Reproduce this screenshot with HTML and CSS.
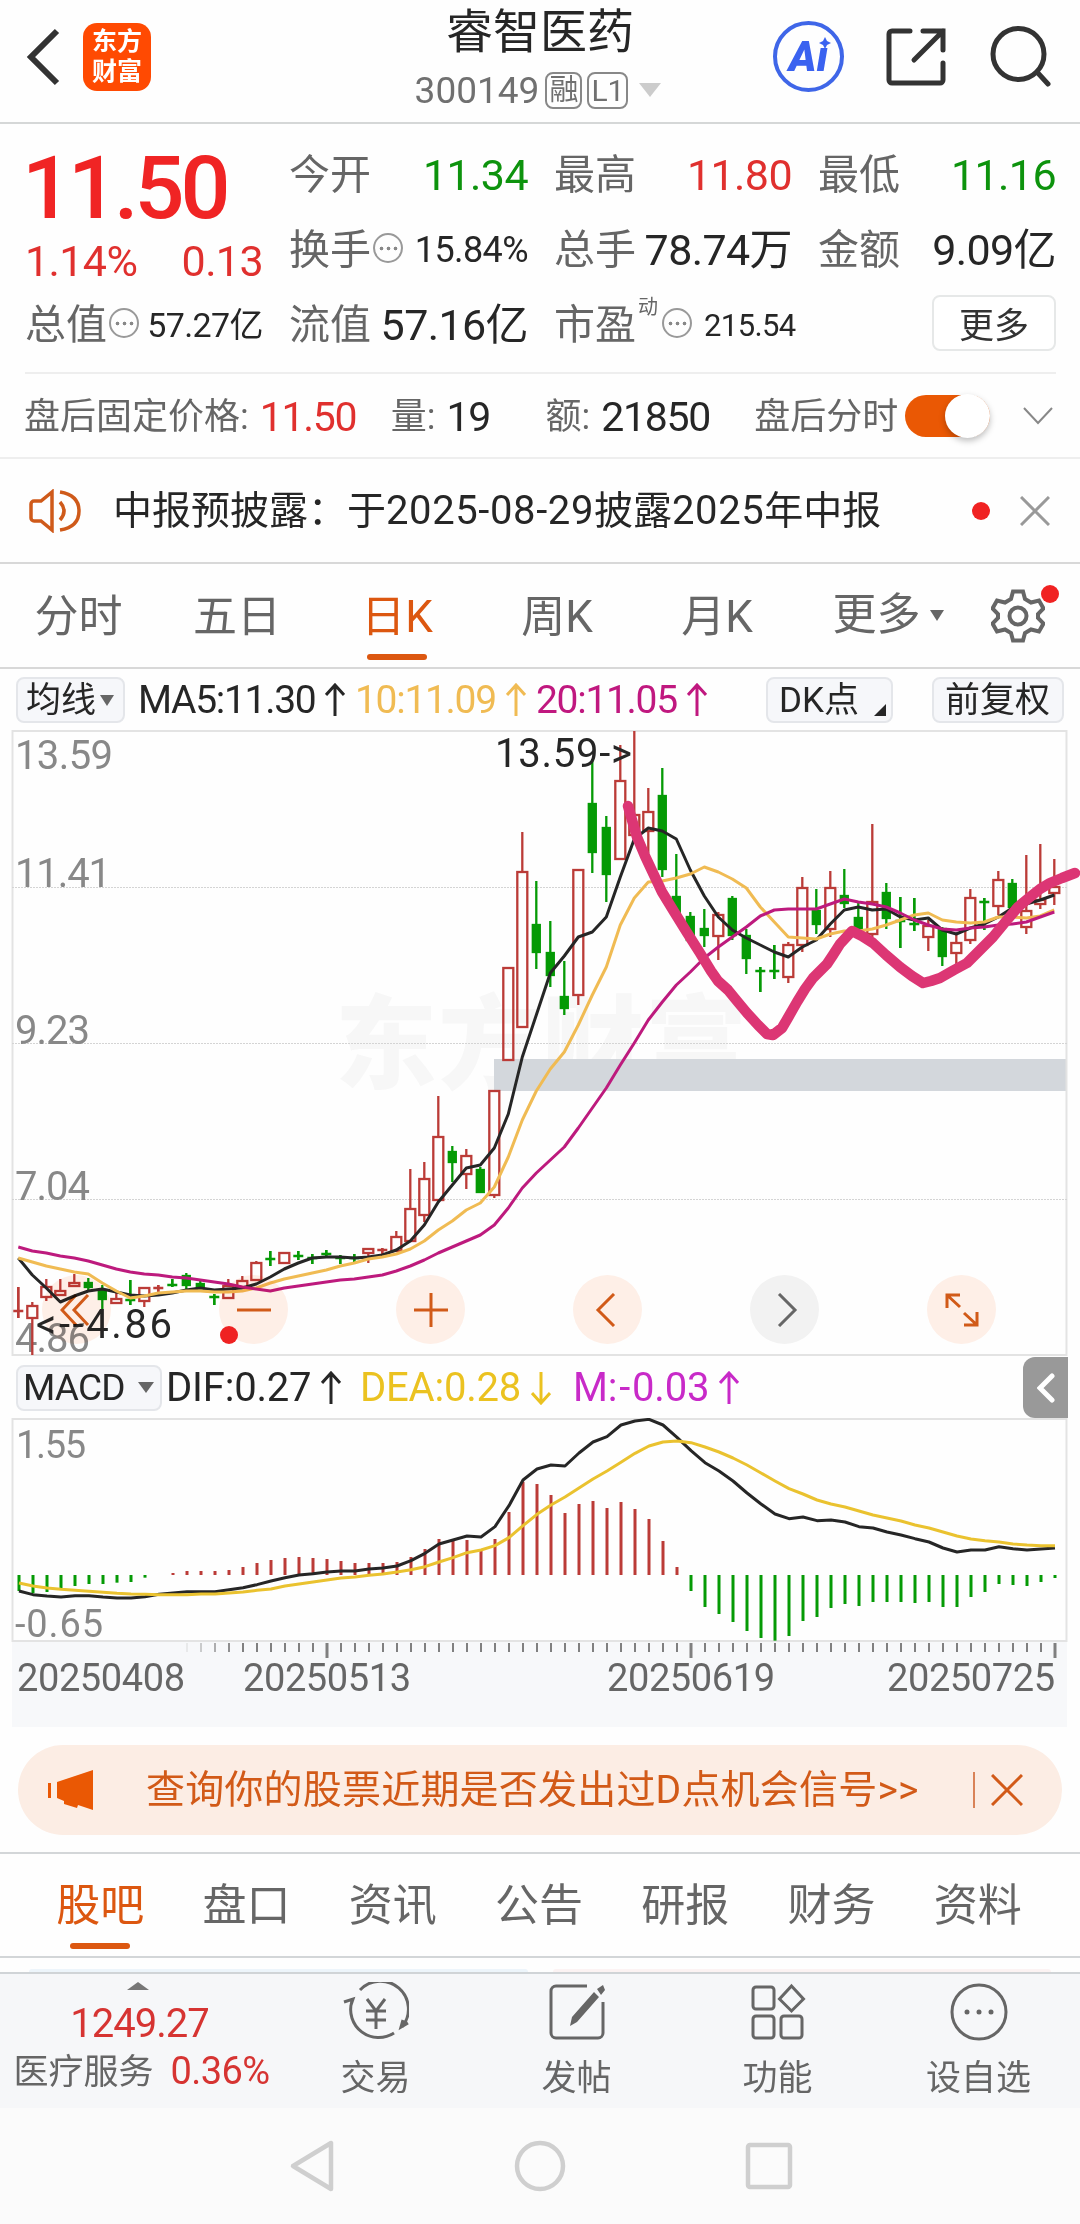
FILE: index.html
```
<!DOCTYPE html>
<html lang="zh-CN">
<head>
    <meta charset="UTF-8">
    <meta name="viewport" content="width=device-width, initial-scale=1.0">
    <title>睿智医药 300149</title>
    <link rel="stylesheet" href="styles.css">
</head>
<body>
    <header class="header">
        <div class="header-left">
            <svg class="back" width="36" height="60" viewBox="0 0 36 60"><path d="M32 4 6 30l26 26"/></svg>
            <div class="logo"><span>东方</span><span>财富</span></div>
        </div>
        <div class="header-title">
            <h1>睿智医药</h1>
            <div class="code">
                <span class="code-num">300149</span>
                <span class="tag">融</span>
                <span class="tag tag-l1">L1</span>
                <i class="tri tri-light"></i>
            </div>
        </div>
        <div class="header-right">
            <div class="ai"><span>A</span><span>ı</span><svg width="12" height="12" viewBox="0 0 12 12"><path d="m6 0 2 4 4 2-4 2-2 4-2-4-4-2 4-2z"/></svg></div>
            <svg class="line-icon" width="62" height="62" viewBox="0 0 62 62"><path d="M24 5H6a3 3 0 0 0-3 3v46a3 3 0 0 0 3 3h48a3 3 0 0 0 3-3V37M37 5h20v19M57 5 28 34"/></svg>
            <svg class="line-icon" width="64" height="64" viewBox="0 0 64 64"><circle cx="31.500" cy="29" r="25.500"/><path d="m50 47 11 12"/></svg>
        </div>
    </header>

    <section class="quote">
        <div class="price">
            <div class="price-now">11.50</div>
            <div class="price-change"><span>1.14%</span><span>0.13</span></div>
        </div>
        <div class="item"><label>今开</label><b class="green">11.34</b></div>
        <div class="item"><label>最高</label><b class="red">11.80</b></div>
        <div class="item"><label>最低</label><b class="green">11.16</b></div>
        <div class="item"><label>换手</label><i class="more-dot"></i><b class="small">15.84%</b></div>
        <div class="item"><label>总手</label><b>78.74万</b></div>
        <div class="item"><label>金额</label><b>9.09亿</b></div>
        <div class="item"><label>总值</label><i class="more-dot"></i><b class="small tight">57.27亿</b></div>
        <div class="item"><label>流值</label><b>57.16亿</b></div>
        <div class="item"><label>市盈</label><sup>动</sup><i class="more-dot"></i><b class="tiny">215.54</b></div>
        <div class="item"><button class="more-btn">更多</button></div>
    </section>

    <section class="after">
        <label>盘后固定价格:</label><b class="red after-price">11.50</b>
        <label>量:</label><b class="after-vol">19</b>
        <label>额:</label><b class="after-amt">21850</b>
        <label class="after-label">盘后分时</label>
        <div class="toggle"><i></i></div>
        <svg class="after-arrow" width="30" height="18" viewBox="0 0 30 18"><path d="m1 1 14 15L29 1"/></svg>
    </section>

    <section class="notice">
        <svg class="speaker" width="52" height="44" viewBox="0 0 52 44"><path d="M23 3 12 12H5a3 3 0 0 0-3 3v14a3 3 0 0 0 3 3h7l11 9zM31 13q8 9 0 18M31 3q19 3 19 19T31 41"/></svg>
        <p>中报预披露：于<span>2025-08-29</span>披露<span>2025</span>年中报</p>
        <i class="dot"></i>
        <svg class="close" width="30" height="30" viewBox="0 0 30 30"><path d="m1 1 28 28M29 1 1 29"/></svg>
    </section>

    <nav class="period">
        <a>分时</a>
        <a>五日</a>
        <a class="active">日K</a>
        <a>周K</a>
        <a>月K</a>
        <a class="period-more">更多<i class="tri tri-small"></i></a>
        <a class="period-set">
            <svg width="54" height="54" viewBox="0 0 54 54"><path d="M22 2.500h10l2 7.500 6 3.500 8-2 4.500 8-5.500 5.500v4l5.500 5.500-4.500 8-8-2-6 3.500-2 7.500H22l-2-7.500-6-3.500-8 2-4.500-8L7 29v-4l-5.500-5.500 4.500-8 8 2 6-3.500z"/><circle cx="27" cy="27" r="8.500"/></svg>
            <i class="dot"></i>
        </a>
    </nav>

    <section class="ma">
        <div class="chip chip-ma">均线<i class="tri tri-small"></i></div>
        <span class="ma5">MA5:11.30<svg class="arrow" width="20" height="34" viewBox="0 0 20 34"><path d="M10 33V2M1 12l9-10 9 10"/></svg></span>
        <span class="ma10">10:11.09<svg class="arrow" width="20" height="34" viewBox="0 0 20 34"><path d="M10 33V2M1 12l9-10 9 10"/></svg></span>
        <span class="ma20">20:11.05<svg class="arrow" width="20" height="34" viewBox="0 0 20 34"><path d="M10 33V2M1 12l9-10 9 10"/></svg></span>
        <div class="chip chip-dk">DK点<i class="corner"></i></div>
        <div class="chip chip-fq">前复权</div>
    </section>

    <section class="kline">
        <svg id="kline" width="1080" height="627" viewBox="0 730 1080 627"></svg>
        <div class="tools">
            <span class="tool"><svg width="34" height="34" viewBox="0 0 34 34"><path d="M16 2 2 17l14 15M28 2 14 17l14 15"/></svg></span>
            <span class="tool"><svg width="34" height="34" viewBox="0 0 34 34"><path d="M0 17h34"/></svg><i class="dot"></i></span>
            <span class="tool"><svg width="34" height="34" viewBox="0 0 34 34"><path d="M0 17h34M17 0v34"/></svg></span>
            <span class="tool"><svg width="34" height="34" viewBox="0 0 34 34"><path d="M23 1 7 17l16 16"/></svg></span>
            <span class="tool tool-off"><svg width="34" height="34" viewBox="0 0 34 34"><path d="m11 1 16 16-16 16"/></svg></span>
            <span class="tool"><svg width="36" height="36" viewBox="0 0 36 36"><path d="M3 16V3h13M3 3l13 12M33 20v13H20M33 33 20 21"/></svg></span>
        </div>
    </section>

    <section class="macd-bar">
        <div class="chip chip-macd">MACD<i class="tri tri-small"></i></div>
        <span class="dif">DIF:0.27<svg class="arrow" width="20" height="34" viewBox="0 0 20 34"><path d="M10 33V2M1 12l9-10 9 10"/></svg></span>
        <span class="dea">DEA:0.28<svg class="arrow" width="20" height="34" viewBox="0 0 20 34"><path d="M10 1v31M1 22l9 10 9-10"/></svg></span>
        <span class="m">M:<span>-</span>0.03<svg class="arrow" width="20" height="34" viewBox="0 0 20 34"><path d="M10 33V2M1 12l9-10 9 10"/></svg></span>
        <div class="fold"><svg width="18" height="30" viewBox="0 0 18 30"><path d="M15 3 3 15l12 12"/></svg></div>
    </section>

    <svg id="macd" class="macd" width="1080" height="310" viewBox="0 1418 1080 310"></svg>

    <section class="promo">
        <svg class="horn" width="48" height="40" viewBox="0 0 48 40"><path d="M1 13h3v15H1zM10 12 46 0v40l-15-5-1 3-13-4v-3l-7-3z"/></svg>
        <p>查询你的股票近期是否发出过D点机会信号&gt;&gt;</p>
        <i class="promo-line"></i>
        <svg class="promo-close" width="32" height="32" viewBox="0 0 32 32"><path d="m1 1 30 30M31 1 1 31"/></svg>
    </section>

    <nav class="tabs">
        <a class="active">股吧</a>
        <a>盘口</a>
        <a>资讯</a>
        <a>公告</a>
        <a>研报</a>
        <a>财务</a>
        <a>资料</a>
    </nav>
    <div class="cards"><i></i><i class="pink"></i></div>

    <footer class="bottom">
        <div class="sector">
            <i class="tri tri-up"></i>
            <div class="sector-num">1249.27</div>
            <div class="sector-name">医疗服务<b>0.36%</b></div>
        </div>
        <div class="action">
            <svg width="66" height="60" viewBox="0 0 66 60"><path d="M17 8a28 28 0 0 1 42 37M51 51A28 28 0 0 1 9 19M1 20l9-3-2 6M65 41l-7 4 2-7M24 17l9 12 9-12M33 29v18M23 29h20M23 38h20"/></svg>
            <span>交易</span>
        </div>
        <div class="action">
            <svg width="60" height="60" viewBox="0 0 60 60"><path d="M40 4H9a5 5 0 0 0-5 5v42a5 5 0 0 0 5 5h42a5 5 0 0 0 5-5V20"/><path class="solid" d="m50 7 6-4 2 5-4 5zM47 10l5 5-22 25-7 4 2-9z"/></svg>
            <span>发帖</span>
        </div>
        <div class="action">
            <svg width="60" height="60" viewBox="0 0 60 60"><rect x="5" y="5" width="21" height="22" rx="3"/><rect x="5" y="34" width="21" height="22" rx="3"/><rect x="33" y="34" width="21" height="22" rx="3"/><path d="m43.500 4 12 13-12 12-12-12z"/></svg>
            <span>功能</span>
        </div>
        <div class="action">
            <svg width="60" height="60" viewBox="0 0 60 60"><circle cx="30" cy="30" r="27"/><g class="solid"><circle cx="18" cy="30" r="2.500"/><circle cx="30" cy="30" r="2.500"/><circle cx="42" cy="30" r="2.500"/></g></svg>
            <span>设自选</span>
        </div>
    </footer>

    <div class="sysnav">
        <svg width="50" height="54" viewBox="0 0 50 54"><path d="M43 4v46L5 27z"/></svg>
        <svg width="54" height="54" viewBox="0 0 54 54"><circle cx="27" cy="27" r="23"/></svg>
        <svg width="54" height="54" viewBox="0 0 54 54"><rect x="6" y="6" width="42" height="42" rx="2"/></svg>
    </div>

    <script src="script.js"></script>
</body>
</html>
```
FILE: styles.css
```
* {
    box-sizing: border-box;
}
body {
    margin: 0;
    width: 1080px;
    height: 2224px;
    overflow: hidden;
    background: #fefefe;
    color: #262626;
    font-family: Roboto, "Noto Sans CJK SC", sans-serif;
    line-height: 1;
}
h1, p {
    margin: 0;
    font-weight: 400;
}
b {
    font-weight: 400;
}
svg {
    display: block;
    flex: none;
    fill: none;
}
.red {
    color: #e0302e;
}
.green {
    color: #0d930d;
}
.dot {
    width: 18px;
    height: 18px;
    border-radius: 50%;
    background: #f02222;
}
.tri {
    width: 0;
    height: 0;
    border: 11px solid transparent;
    border-bottom: 0;
    border-top: 14px solid #ccc;
}
.tri-small {
    border-width: 11px 7px 0;
    border-top-color: #666;
}
.tri-up {
    border: 11px solid transparent;
    border-top: 0;
    border-bottom: 8px solid #777;
}

/* 顶部 */
.header {
    display: grid;
    grid-template-columns: 320px 1fr 320px;
    height: 124px;
    border-bottom: 2px solid #d5d7d7;
}
.header-left {
    display: flex;
    align-items: center;
    height: 113px;
    padding-left: 25px;
}
.back {
    stroke: #333;
    stroke-width: 6;
}
.logo {
    width: 68px;
    height: 68px;
    margin-left: 22px;
    padding-top: 4px;
    border-radius: 14px;
    background: #ff4a02;
    color: #fff;
    font-size: 25px;
    font-weight: 700;
    line-height: 30px;
    text-align: center;
}
.logo span {
    display: block;
}
.header-title {
    text-align: center;
}
.header-title h1 {
    height: 68px;
    font-size: 47px;
    line-height: 64px;
}
.code {
    display: flex;
    align-items: center;
    justify-content: center;
    height: 44px;
    margin-left: -4px;
    color: #707070;
    gap: 5px;
}
.code-num {
    margin-right: 1px;
    font-size: 37px;
}
.tag {
    width: 37px;
    height: 37px;
    border: 2px solid #888;
    border-radius: 8px;
    font-size: 29px;
    line-height: 32px;
}
.tag-l1 {
    width: 41px;
    font-size: 30px;
    line-height: 34px;
}
.code .tri {
    margin-left: 6px;
}
.header-right {
    display: flex;
    align-items: center;
    height: 113px;
    padding-left: 13px;
}
.header-right .line-icon {
    stroke: #333;
    stroke-width: 5;
    stroke-linecap: round;
}
.ai {
    position: relative;
    display: flex;
    justify-content: center;
    width: 71px;
    height: 71px;
    margin-right: 42px;
    border: 4px solid #3f66e8;
    border-radius: 50%;
    color: #3a62f0;
    font-size: 42px;
    font-style: italic;
    font-weight: 900;
    line-height: 64px;
}
.ai svg {
    position: absolute;
    top: 12px;
    right: 9px;
    fill: #3a62f0;
}
.header-right .line-icon + .line-icon {
    margin-left: 39px;
}

/* 行情 */
.quote {
    display: grid;
    grid-template-columns: 238px 239px 238px 238px;
    grid-template-rows: 75px 75px 75px;
    column-gap: 26px;
    height: 250px;
    margin: 0 24px 0 25px;
    padding-top: 13px;
    border-bottom: 2px solid #eee;
}
.price {
    grid-row: span 2;
    color: #f02424;
}
.price-now {
    height: 98px;
    margin-left: -3px;
    font-size: 88px;
    font-weight: 500;
    line-height: 102px;
    letter-spacing: -4px;
}
.price-change {
    display: flex;
    justify-content: space-between;
    color: #e0302e;
    font-size: 43px;
    line-height: 52px;
    letter-spacing: -0.6px;
}
.item {
    display: flex;
    align-items: center;
    justify-content: space-between;
    position: relative;
    padding-top: 1px;
}
.item label {
    flex: none;
    color: #666;
    font-size: 41px;
}
.item b {
    margin-left: auto;
    font-size: 43px;
    letter-spacing: -0.6px;
    white-space: nowrap;
}
.item b.small {
    font-size: 36px;
}
.item b.tight {
    font-size: 34px;
    letter-spacing: -0.6px;
}
.item b.tiny {
    margin: 0 auto 0 12px;
    font-size: 31px;
}
.item sup {
    align-self: flex-start;
    flex: none;
    width: 22px;
    margin-top: 9px;
    margin-left: 2px;
    color: #666;
    font-size: 20px;
}
.more-dot {
    flex: none;
    width: 30px;
    height: 30px;
    margin: -4px 0 0 2px;
    border: 2px solid #999;
    border-radius: 50%;
    background: radial-gradient(circle, #888 1.500px, transparent 2.200px) center / 7px 7px no-repeat,
        radial-gradient(circle, #888 1.500px, transparent 2.200px) 3px 10px / 7px 7px no-repeat,
        radial-gradient(circle, #888 1.500px, transparent 2.200px) 17px 10px / 7px 7px no-repeat;
}
.more-btn {
    width: 124px;
    height: 56px;
    margin: -4px 0 0 auto;
    padding: 0 0 4px;
    border: 2px solid #e6e8e8;
    border-radius: 8px;
    background: #fff;
    color: #333;
    font: 35px Roboto, "Noto Sans CJK SC", sans-serif;
}

/* 盘后 */
.after {
    display: flex;
    align-items: center;
    height: 85px;
    padding-left: 24px;
    border-bottom: 2px solid #eee;
    white-space: nowrap;
}
.after label {
    padding-top: 3px;
    color: #666;
    font-size: 36px;
}
.after b {
    margin-left: 11px;
    padding-top: 3px;
    font-size: 41px;
    letter-spacing: -1.3px;
}
.after-price {
    width: 131px;
}
.after-vol {
    width: 99px;
}
.after-amt {
    width: 153px;
}
.after .after-label {
    margin-right: 7px;
}
.toggle {
    width: 85px;
    height: 42px;
    border-radius: 21px;
    background: #ea5804;
}
.toggle i {
    display: block;
    width: 45px;
    height: 44px;
    margin: -1px 0 0 40px;
    border-radius: 50%;
    background: #fff;
    box-shadow: 0 3px 6px rgba(0, 0, 0, 0.25);
}
.after-arrow {
    margin-left: 33px;
    stroke: #888;
    stroke-width: 2;
}

/* 公告 */
.notice {
    display: flex;
    align-items: center;
    height: 105px;
    padding-left: 29px;
    border-bottom: 2px solid #d8d8d8;
}
.speaker {
    stroke: #cf5a1a;
    stroke-width: 3.500;
}
.notice p {
    width: 858px;
    padding-left: 32px;
    font-size: 39px;
    white-space: nowrap;
}
.notice p span {
    font-size: 40px;
    letter-spacing: 0.6px;
}
.notice .dot {
    margin-left: 33px;
}
.close {
    margin-left: 30px;
    stroke: #999;
    stroke-width: 3;
}

/* 周期 */
.period {
    display: flex;
    height: 105px;
    border-bottom: 2px solid #d8d8d8;
    color: #666;
    font-size: 44px;
}
.period a {
    position: relative;
    width: 160px;
    line-height: 107px;
    text-align: center;
    white-space: nowrap;
}
.period a:first-child {
    width: 157px;
}
.period .active,
.tabs .active {
    color: #dc5710;
}
.period .active::after,
.tabs .active::after {
    content: "";
    position: absolute;
    bottom: 7px;
    left: 50%;
    width: 60px;
    height: 6px;
    margin-left: -30px;
    border-radius: 3px;
    background: #dc5710;
}
.period .period-more {
    display: flex;
    align-items: center;
    justify-content: center;
    width: 182px;
}
.period-more .tri {
    margin-left: 9px;
}
.period .period-set {
    width: 98px;
    padding: 25px 0 0 12px;
}
.period-set svg {
    stroke: #666;
    stroke-width: 4;
}
.period-set .dot {
    position: absolute;
    top: 21px;
    left: 62px;
}

/* 均线 */
.ma,
.macd-bar {
    display: flex;
    align-items: center;
    height: 61px;
    font-size: 39px;
    white-space: nowrap;
}
.ma {
    padding: 1px 0 0 16px;
    letter-spacing: -1.3px;
}
.chip {
    position: relative;
    display: flex;
    align-items: center;
    height: 46px;
    border: 2px solid #e4e6ea;
    border-radius: 8px;
    background: #f6f7fa;
    font-size: 35px;
    letter-spacing: 0;
}
.chip-ma {
    width: 109px;
    padding-left: 8px;
}
.chip-ma .tri {
    margin-left: 4px;
}
.arrow {
    display: inline-block;
    margin-left: 10px;
    vertical-align: -4px;
    stroke: currentColor;
    stroke-width: 3;
}
.ma5 {
    width: 218px;
    padding-left: 13px;
}
.ma10 {
    width: 181px;
    padding-left: 12px;
    color: #f0bb53;
}
.ma20 {
    width: 229px;
    padding-left: 12px;
    color: #c0187f;
}
.chip-dk {
    width: 127px;
    margin-left: 13px;
    padding-left: 11px;
}
.corner {
    position: absolute;
    right: 5px;
    bottom: 5px;
    border: 6px solid #262626;
    border-top-color: transparent;
    border-left-color: transparent;
}
.chip-fq {
    width: 132px;
    margin-left: 39px;
    padding-left: 11px;
}

/* K线 */
.kline {
    position: relative;
    height: 627px;
}
.kline text,
.macd text {
    fill: #888;
    font-size: 40px;
}
.kline .mark {
    fill: #262626;
}
.kline .watermark {
    fill: #f7f7f7;
    font-size: 102px;
    font-weight: 900;
}
.macd .date {
    fill: #666;
    font-size: 38px;
}
.macd .scale {
    font-size: 38px;
}
.frame {
    stroke: #e3e3e3;
    stroke-width: 2;
}
.grid {
    stroke: #d4d4d4;
    stroke-width: 1;
    stroke-dasharray: 2 1;
}
.gap {
    fill: #d3d7dc;
}
.up {
    stroke: #bb3b37;
    stroke-width: 2.300;
}
.down {
    fill: #059a05;
    stroke: #059a05;
    stroke-width: 2.300;
}
.bar {
    stroke-width: 3;
}
.line {
    stroke-width: 3;
    stroke-linejoin: round;
}
.line-black {
    stroke: #262626;
}
.line-yellow {
    stroke: #f0bb53;
}
.line-purple {
    stroke: #bd1a7d;
}
.line-dea {
    stroke: #eac22f;
}
.pen {
    stroke: #dc3674;
    stroke-width: 10.500;
    stroke-linecap: round;
    stroke-linejoin: round;
}
.tick {
    stroke: #808080;
    stroke-width: 2;
}
.tick-big {
    stroke-width: 3;
}
.axis-bg {
    fill: #f7f8fa;
}
.tools {
    position: absolute;
    top: 545px;
    left: 42px;
    display: flex;
    gap: 108px;
    mix-blend-mode: multiply;
}
.tool {
    position: relative;
    display: flex;
    align-items: center;
    justify-content: center;
    width: 69px;
    height: 69px;
    border-radius: 50%;
    background: #fff0e8;
}
.tool svg {
    stroke: #d25a18;
    stroke-width: 3;
}
.tool-off {
    background: #f3f3f3;
}
.tool-off svg {
    stroke: #666;
}
.tool .dot {
    position: absolute;
    bottom: 0;
    left: 1px;
}

/* MACD */
.macd-bar {
    padding-left: 16px;
    font-size: 40px;
    letter-spacing: -0.2px;
}
.chip-macd {
    width: 146px;
    padding-left: 5px;
    font-size: 37px;
    letter-spacing: -0.8px;
}
.chip-macd .tri {
    margin-left: 13px;
    border-left-width: 8px;
    border-right-width: 8px;
}
.dif {
    width: 198px;
    padding-left: 4px;
}
.dea {
    width: 213px;
    color: #ebc220;
}
.m {
    width: 450px;
    color: #c82ac8;
}
.m span {
    margin: 0 2px;
}
.fold {
    display: flex;
    align-items: center;
    justify-content: center;
    width: 45px;
    height: 61px;
    border-radius: 12px 0 0 12px;
    background: #999;
}
.fold svg {
    stroke: #fff;
    stroke-width: 5;
    stroke-linecap: round;
}

/* 推广 */
.promo {
    display: flex;
    align-items: center;
    height: 90px;
    margin: 17px 18px;
    padding-left: 29px;
    border-radius: 45px;
    background: #fcede4;
    color: #d25a18;
}
.horn {
    fill: #ea5804;
}
.promo p {
    width: 878px;
    padding-left: 51px;
    font-size: 39px;
    letter-spacing: 0.2px;
    white-space: nowrap;
}
.promo-line {
    width: 2px;
    height: 36px;
    background: #d98358;
}
.promo-close {
    margin-left: 16px;
    stroke: #d25a18;
    stroke-width: 3;
}

/* 底部 */
.tabs {
    display: flex;
    height: 106px;
    padding: 0 29px 0 27px;
    border-top: 2px solid #d3d6d8;
    border-bottom: 2px solid #d3d6d8;
    color: #666;
    font-size: 44px;
}
.tabs a {
    position: relative;
    flex: 1;
    line-height: 105px;
    text-align: center;
}
.tabs .active::after {
    bottom: 7px;
}
.cards {
    display: flex;
    gap: 25px;
    height: 14px;
    padding: 11px 29px 0;
}
.cards i {
    flex: 1;
    border-radius: 8px 8px 0 0;
    background: #edf5fb;
}
.cards .pink {
    background: #fcf3f3;
}
.bottom {
    display: flex;
    height: 136px;
    border-top: 2px solid #d0d4d7;
    background: #f6f7f9;
    color: #666;
}
.sector {
    display: flex;
    flex-direction: column;
    align-items: center;
    width: 275px;
    padding-top: 8px;
}
.sector-num {
    margin: 14px 0 0 4px;
    color: #d63432;
    font-size: 40px;
    letter-spacing: -1px;
}
.sector-name {
    width: 262px;
    margin: 8px 0 0 14px;
    font-size: 35px;
    white-space: nowrap;
}
.sector-name b {
    margin-left: 17px;
    color: #d63432;
    font-size: 38px;
    letter-spacing: -0.6px;
}
.action {
    display: flex;
    flex-direction: column;
    align-items: center;
    width: 201px;
    padding-top: 8px;
    font-size: 35px;
}
.action svg {
    margin-bottom: 19px;
    stroke: #666;
    stroke-width: 3;
}
.action .solid {
    fill: #666;
    stroke: none;
}
.sysnav {
    display: flex;
    align-items: center;
    justify-content: center;
    gap: 175px;
    height: 116px;
    padding-left: 4px;
    background: #fbfbfb;
}
.sysnav svg {
    stroke: #cfcfcf;
    stroke-width: 4.500;
    stroke-linejoin: round;
}
```
FILE: script.js
```
const STEP = 14;

// [涨跌, 最高, 实体上沿, 实体下沿, 最低]
const candles = [
    [1, 1287, 1311, 1312, 1318], [1, 1302, 1306, 1318, 1355], [1, 1279, 1287, 1297, 1301], [1, 1279, 1291, 1295, 1296], [1, 1274, 1283, 1286, 1286],
    [0, 1278, 1283, 1287, 1290], [0, 1285, 1291, 1299, 1309], [1, 1293, 1299, 1303, 1303], [0, 1280, 1300, 1300, 1305], [1, 1288, 1288, 1301, 1307],
    [1, 1285, 1288, 1289, 1292], [0, 1279, 1285, 1285, 1287], [0, 1273, 1276, 1285, 1289], [0, 1279, 1284, 1287, 1288], [0, 1294, 1297, 1297, 1305],
    [1, 1279, 1286, 1298, 1298], [1, 1276, 1281, 1287, 1287], [1, 1261, 1263, 1280, 1280], [0, 1251, 1259, 1259, 1266], [1, 1252, 1253, 1263, 1263],
    [0, 1251, 1256, 1256, 1260], [0, 1254, 1258, 1258, 1264], [0, 1250, 1254, 1255, 1257], [0, 1255, 1258, 1258, 1264], [0, 1254, 1258, 1258, 1264],
    [1, 1248, 1249, 1253, 1263], [1, 1248, 1250, 1250, 1255], [1, 1231, 1237, 1251, 1251], [1, 1169, 1209, 1241, 1241], [1, 1162, 1179, 1215, 1222],
    [1, 1096, 1137, 1200, 1200], [0, 1146, 1152, 1162, 1182], [1, 1149, 1156, 1174, 1189], [0, 1167, 1170, 1192, 1193], [1, 1091, 1091, 1195, 1198],
    [1, 968, 968, 1060, 1060], [1, 832, 872, 1027, 1027], [0, 881, 925, 952, 969], [0, 921, 953, 975, 987], [0, 961, 997, 1008, 1015],
    [1, 870, 870, 995, 1005], [0, 759, 804, 852, 873], [0, 816, 828, 874, 902], [1, 745, 781, 859, 859], [1, 731, 815, 835, 835],
    [1, 788, 812, 831, 853], [0, 768, 796, 869, 877], [0, 854, 897, 915, 918], [0, 912, 917, 940, 942], [0, 909, 929, 935, 947],
    [1, 912, 915, 936, 960], [0, 896, 899, 935, 940], [0, 929, 936, 958, 974], [0, 967, 971, 971, 992], [0, 945, 971, 971, 979],
    [1, 942, 945, 977, 983], [1, 877, 888, 945, 952], [0, 889, 911, 924, 934], [1, 871, 888, 929, 937], [0, 869, 896, 903, 908],
    [0, 902, 918, 928, 930], [1, 824, 902, 934, 937], [0, 883, 893, 918, 929], [0, 897, 921, 921, 948], [0, 898, 924, 924, 931],
    [1, 920, 926, 937, 951], [0, 927, 929, 956, 966], [1, 933, 943, 953, 965], [1, 889, 898, 940, 944], [0, 898, 902, 902, 930],
    [1, 871, 880, 906, 915], [0, 879, 884, 907, 910], [1, 855, 911, 927, 934], [1, 844, 900, 904, 909], [1, 859, 887, 893, 905]
];

const ma5 = [1258, 1275, 1288, 1302, 1296, 1291, 1289, 1292, 1295, 1296, 1295, 1293, 1290, 1288, 1290, 1289, 1288, 1284, 1277, 1269,
    1263, 1258, 1257, 1257, 1258, 1257, 1255, 1250, 1241, 1225, 1202, 1185, 1168, 1165, 1148, 1114, 1057, 1015, 973, 956,
    937, 932, 917, 877, 839, 828, 831, 839, 870, 896, 917, 930, 938, 945, 952, 957, 947, 940, 924, 910,
    907, 910, 909, 917, 920, 918, 930, 934, 928, 924, 917, 908, 904, 900, 895];
const ma10 = [1258, 1262, 1266, 1269, 1272, 1274, 1283, 1291, 1298, 1296, 1293, 1292, 1291, 1291, 1292, 1292, 1291, 1288, 1283, 1279,
    1276, 1273, 1270, 1266, 1263, 1259, 1257, 1254, 1249, 1241, 1230, 1221, 1210, 1203, 1187, 1157, 1120, 1091, 1069, 1052,
    1025, 995, 967, 925, 898, 882, 881, 878, 874, 867, 872, 879, 888, 907, 922, 937, 938, 939, 934, 931,
    931, 929, 925, 920, 915, 913, 920, 922, 923, 922, 917, 917, 918, 916, 910];
const ma20 = [1247, 1251, 1253, 1256, 1258, 1261, 1265, 1269, 1272, 1274, 1275, 1277, 1278, 1280, 1282, 1284, 1287, 1289, 1291, 1288,
    1286, 1284, 1282, 1280, 1279, 1277, 1275, 1271, 1266, 1260, 1253, 1247, 1241, 1235, 1225, 1208, 1188, 1173, 1160, 1147,
    1128, 1108, 1088, 1065, 1043, 1020, 1002, 985, 972, 958, 947, 937, 927, 916, 910, 909, 909, 909, 904, 899,
    902, 904, 907, 913, 920, 925, 929, 930, 928, 927, 925, 924, 922, 917, 912];

// MACD 的数值以图框顶部为原点，三分之一像素为单位
const bars = [543, 550, 546, 537, 528, 522, 522, 518, 516, 503, 495, 489, 483, 483, 483, 480, 471, 459, 450, 444,
    441, 444, 447, 453, 459, 459, 459, 456, 441, 417, 387, 387, 390, 417, 387, 306, 215, 222, 255, 309,
    282, 273, 294, 276, 297, 327, 393, 471, 543, 591, 612, 636, 663, 684, 692, 678, 633, 621, 594, 582,
    588, 576, 576, 576, 579, 576, 591, 591, 561, 546, 522, 525, 528, 516, 504];
const dif = [543, 554, 558, 561, 557, 557, 561, 564, 564, 560, 553, 549, 545, 545, 545, 539, 533, 524, 513, 503,
    495, 491, 486, 483, 483, 477, 474, 468, 452, 430, 402, 390, 378, 381, 350, 287, 210, 177, 165, 168,
    129, 96, 80, 45, 33, 28, 45, 82, 122, 158, 183, 213, 249, 282, 312, 326, 321, 332, 330, 336,
    350, 354, 366, 375, 386, 396, 414, 426, 420, 420, 410, 416, 420, 417, 414];
const dea = [519, 528, 534, 538, 541, 544, 547, 550, 552, 553, 554, 554, 554, 552, 552, 549, 546, 541, 537, 528,
    522, 516, 510, 504, 501, 496, 492, 486, 479, 470, 456, 443, 428, 420, 407, 383, 347, 313, 285, 261,
    234, 207, 183, 157, 130, 108, 96, 93, 98, 111, 126, 144, 165, 189, 213, 236, 252, 270, 282, 291,
    303, 315, 324, 333, 345, 354, 366, 378, 387, 392, 396, 402, 405, 407, 407];

const pen = 'M628 806 632 820 637 837 645 856 653 873 662 892 673 910 686 931 700 953 711 971 718 981 728 990 737 1001 747 1013 758 1025 767 1034 773 1035 782 1028 789 1016 797 1002 805 989 813 978 820 971 827 964 833 955 840 944 852 931 862 936 873 943 886 955 900 967 912 976 923 983 931 981 940 978 954 970 967 963 980 950 993 937 1007 920 1018 907 1030 897 1040 889 1050 883 1062 878 1075 873';

function line(values, left, cls, map) {
    const points = values.map((v, i) => (left + i * STEP) + ',' + (map ? map(v) : v)).join(' ');
    return `<polyline class="line ${cls}" points="${points}"/>`;
}

function text(str, x, y, width, cls) {
    return `<text class="${cls || ''}" x="${x}" y="${y}" textLength="${width}">${str}</text>`;
}

function drawKline() {
    let html = text('东方财富', 335, 1081, 412, 'watermark');
    html += '<rect class="gap" x="494" y="1059" width="573" height="32"/>';
    html += '<rect class="frame" x="12.500" y="731" width="1054" height="624"/>';
    [887.5, 1043.5, 1199.5].forEach(y => {
        html += `<path class="grid" d="M12 ${y}H1067"/>`;
    });
    html += text('13.59', 15, 769, 98) + text('11.41', 15, 887, 96) + text('9.23', 15, 1044, 75)
        + text('7.04', 15, 1200, 75) + text('4.86', 15, 1352, 75);

    candles.forEach(([up, high, top, bottom, low], i) => {
        const x = 18.3 + i * STEP;
        html += `<g class="${up ? 'up' : 'down'}"><path d="M${x} ${high}V${top}M${x} ${bottom}V${low}"/>`;
        if (bottom - top < 2) {
            html += `<path d="M${x - 5} ${top}h10M${x} ${high}V${low}"/></g>`;
        } else {
            const w = up ? 10 : 7;
            html += `<rect x="${x - w / 2}" y="${top}" width="${w}" height="${bottom - top}"/></g>`;
        }
    });

    html += line(ma5, 18.3, 'line-black') + line(ma10, 18.3, 'line-yellow') + line(ma20, 18.3, 'line-purple');
    html += text('13.59-&gt;', 495, 767, 137, 'mark') + text('&lt;--4.86', 36, 1338, 136, 'mark');
    html += `<path class="pen" d="${pen}"/>`;
    document.getElementById('kline').innerHTML = html;
}

function drawMacd() {
    const toY = v => 1410 + v / 3;
    let html = '<rect class="axis-bg" x="12" y="1642" width="1055" height="85"/>';
    html += '<rect class="frame" x="12.500" y="1419" width="1054" height="222"/>';
    html += text('1.55', 16, 1458, 70, 'scale') + text('-0.65', 15, 1637, 88, 'scale');
    bars.forEach((v, i) => {
        if (v !== 495) {
            html += `<path class="${v < 495 ? 'up' : 'down'} bar" d="M${19 + i * STEP} 1575V${toY(v)}"/>`;
        }
        if (i > 11) {
            const big = [22, 48, 74].includes(i);
            const fade = Math.min(1, (i - 11.5) / 4);
            html += `<path class="tick ${big ? 'tick-big' : ''}" opacity="${fade}" d="M${19 + i * STEP} 1643v${big ? 15 : 9}"/>`;
        }
    });
    html += line(dif, 19, 'line-black', toY) + line(dea, 19, 'line-dea', toY);
    html += text('20250408', 17, 1691, 168, 'date') + text('20250513', 243, 1691, 168, 'date')
        + text('20250619', 607, 1691, 168, 'date') + text('20250725', 887, 1691, 168, 'date');
    document.getElementById('macd').innerHTML = html;
}

drawKline();
drawMacd();
```
